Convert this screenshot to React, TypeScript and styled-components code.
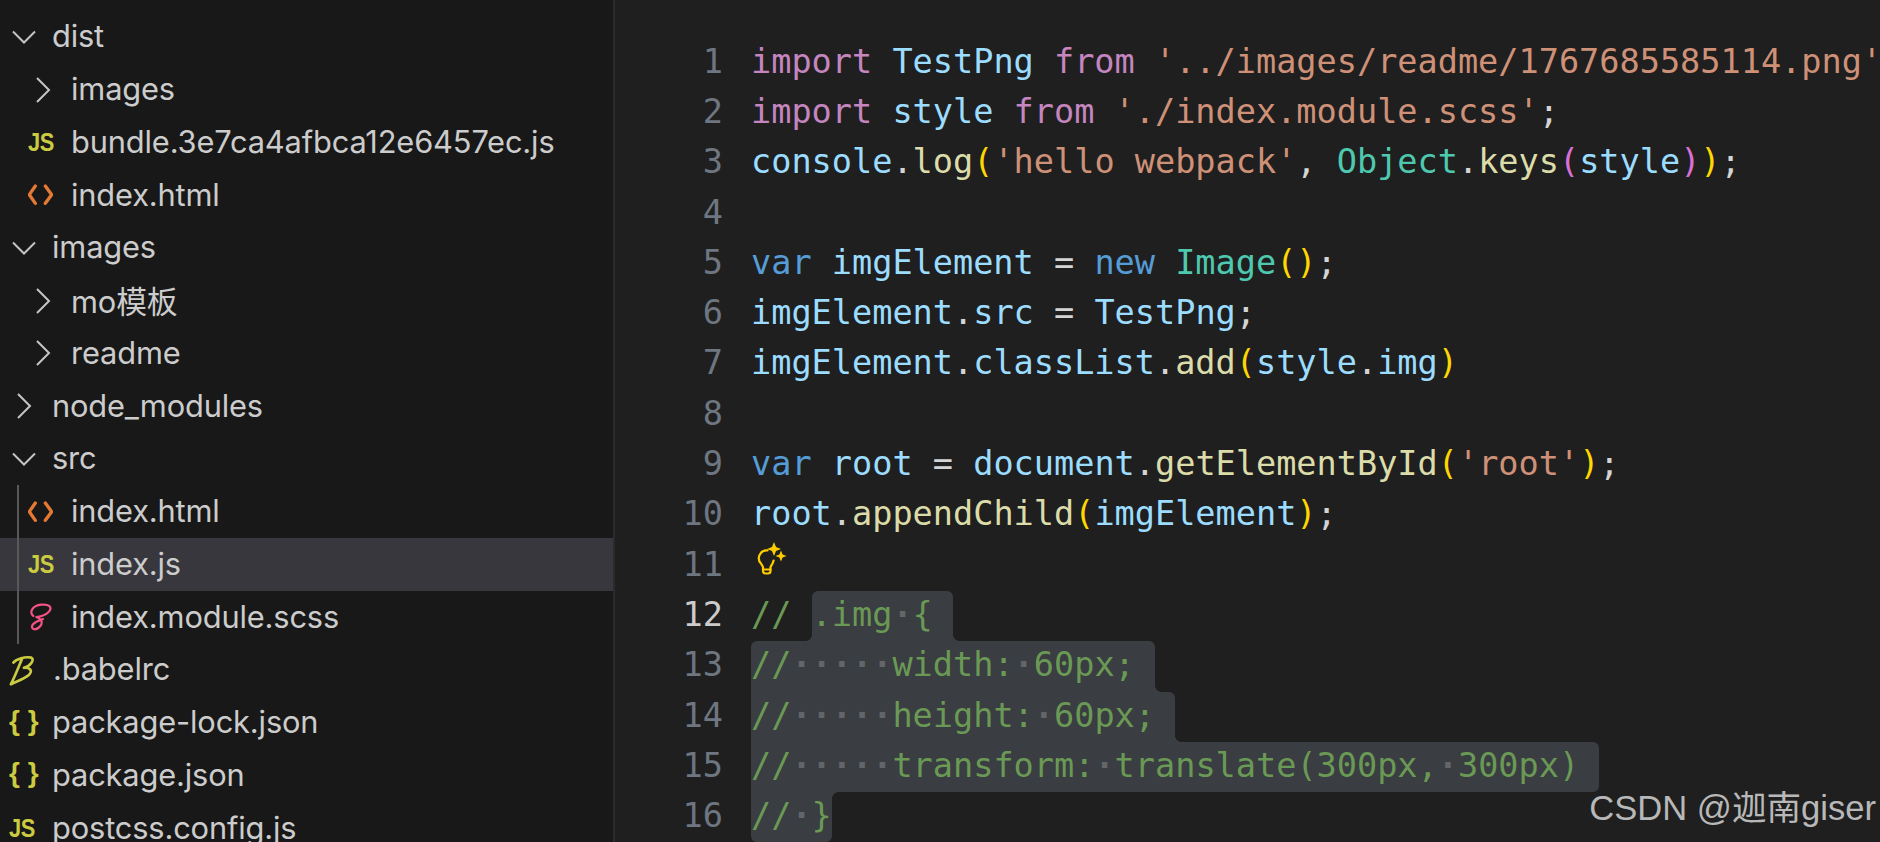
import React from "react";
import styled, { createGlobalStyle } from "styled-components";

const CH = 20.2;

const Global = createGlobalStyle`
  html, body { margin: 0; padding: 0; background: #1f1f1f; overflow: hidden; }
  #root { width: 1880px; height: 842px; }
`;

const Window = styled.div`
  position: relative;
  display: flex;
  width: 1880px;
  height: 842px;
  overflow: hidden;
  background: #1f1f1f;
`;

const Sidebar = styled.aside`
  flex: 0 0 613px;
  box-sizing: content-box;
  padding-top: 10.5px;
  background: #181818;
  border-right: 2px solid #2b2b2b;
  font-family: Inter, "Noto Sans CJK SC", sans-serif;
  font-size: 30.8px;
  color: #cccccc;
  overflow: hidden;
`;

const Group = styled.div`
  position: relative;
  &::before {
    content: "";
    position: absolute;
    z-index: 1;
    left: 17px;
    top: 0;
    bottom: 0;
    width: 2px;
    background: #585858;
  }
`;

const Row = styled.div<{ $level: number; $selected?: boolean }>`
  display: flex;
  align-items: center;
  height: 52.75px;
  padding-left: ${(p) => 9 + p.$level * 19}px;
  background: ${(p) => (p.$selected ? "#37373d" : "transparent")};
`;

const IconSlot = styled.span`
  display: flex;
  align-items: center;
  flex: 0 0 25px;
  height: 100%;
  margin-right: 18px;
`;

const Label = styled.span`
  padding-bottom: 2px;
  white-space: nowrap;
  letter-spacing: -0.15px;
`;

const JsGlyph = styled.span`
  display: block;
  width: 25px;
  font: 700 26px/1 "Liberation Sans", sans-serif;
  letter-spacing: -0.5px;
  color: #cbcb41;
  transform: scaleX(0.84);
  transform-origin: left center;
`;

const JsonGlyph = styled.span`
  display: block;
  width: 25px;
  font: 700 28px/1 "Liberation Sans", sans-serif;
  white-space: pre;
  color: #cbcb41;
  transform: translateY(-2px);
`;

const Chevron = styled.svg`
  flex: none;
  margin-left: 3px;
  margin-right: -3px;
  fill: none;
  stroke: #c5c5c5;
  stroke-width: 2;
`;

const FileSvg = styled.svg`
  flex: none;
  display: block;
  fill: none;
  stroke-linecap: round;
  stroke-linejoin: round;
`;

const Editor = styled.main`
  flex: 1;
  min-width: 0;
  padding-top: 37.7px;
  font-family: "DejaVu Sans Mono", monospace;
  font-size: 33.55px;
  overflow: hidden;
`;

const Line = styled.div`
  display: flex;
  height: 50.3px;
  line-height: 47px;
`;

const Gutter = styled.span<{ $active?: boolean }>`
  flex: 0 0 108px;
  margin-right: 28px;
  text-align: right;
  color: ${(p) => (p.$active ? "#cccccc" : "#6e7681")};
`;

const Code = styled.span`
  position: relative;
  flex: 1;
  min-width: 0;
  white-space: pre;
`;

const Text = styled.span`
  position: relative;
`;

const Tok = styled.span<{ $c: string }>`
  color: ${(p) => p.$c};
`;

const Dot = styled.span`
  color: #62666a;
  font-weight: 700;
`;

const Sel = styled.span<{ $from: number; $to: number; $tl?: number; $tr?: number; $br?: number; $bl?: number }>`
  position: absolute;
  top: 0;
  bottom: 0;
  left: ${(p) => p.$from * CH}px;
  width: ${(p) => (p.$to - p.$from) * CH}px;
  background: #3a3d41;
  border-radius: ${(p) => `${p.$tl ?? 0}px ${p.$tr ?? 0}px ${p.$br ?? 0}px ${p.$bl ?? 0}px`};
`;

const Notch = styled.i<{ $side: "left" | "right"; $edge: "top" | "bottom" }>`
  position: absolute;
  width: 6px;
  height: 6px;
  ${(p) => p.$side}: -6px;
  ${(p) => p.$edge}: 0;
  background: radial-gradient(
    circle at ${(p) => (p.$side === "left" ? "0" : "100%")} ${(p) => (p.$edge === "top" ? "100%" : "0")},
    transparent 5.5px,
    #3a3d41 6px
  );
`;

const Bulb = styled.svg`
  position: absolute;
  left: 5px;
  top: 1px;
  fill: none;
  stroke: #ffcc00;
  stroke-width: 2.2;
  stroke-linecap: round;
  stroke-linejoin: round;
`;

const Star = styled.path`
  fill: #ffcc00;
  stroke: none;
`;

const Watermark = styled.div`
  position: absolute;
  right: 4px;
  bottom: 16px;
  font-family: "Liberation Sans", "Noto Sans CJK SC", sans-serif;
  font-size: 34.6px;
  line-height: 36px;
  color: #b8b8b8;
  white-space: nowrap;
`;

const ChevDown = () => (
  <Chevron width="24" height="14" viewBox="0 0 24 14">
    <path d="M1 1.5 L12 12.5 L23 1.5" />
  </Chevron>
);
const ChevRight = () => (
  <Chevron width="24" height="26" viewBox="0 0 24 26">
    <path d="M6 1 L18 13 L6 25" />
  </Chevron>
);
const Html = () => (
  <FileSvg width="25" height="22" viewBox="40 62 75 62" stroke="#e37933" strokeWidth="10">
    <path d="M62 66 L44 92 L62 118 M92 66 L111 92 L92 118" />
  </FileSvg>
);
const Js = () => <JsGlyph>JS</JsGlyph>;
const Json = () => <JsonGlyph>{"{ }"}</JsonGlyph>;
const Sass = () => (
  <FileSvg width="24" height="31" viewBox="85 35 72 93" stroke="#f55385" strokeWidth="6.5">
    <path d="M101 77 C88 66 97 46 125 43 C148 41 159 50 148 64 C138 76 118 80 110 80 C122 84 132 93 122 107 C112 120 96 120 97 108 C98 96 116 92 130 86" />
  </FileSvg>
);
const Babel = () => (
  <FileSvg width="26" height="34" viewBox="24 183 84 102" stroke="#cbcb41" strokeWidth="8.5">
    <path d="M38 210 C48 198 76 190 96 194 C108 200 94 222 72 227 C92 226 102 236 88 250 C72 264 48 270 30 280 C42 258 54 226 66 198" />
  </FileSvg>
);

type Entry = { name: string; level: number; icon: React.ReactNode; selected?: boolean };
const e = (name: string, level: number, icon: React.ReactNode, selected?: boolean): Entry => ({ name, level, icon, selected });

const before: Entry[] = [
  e("dist", 0, <ChevDown />),
  e("images", 1, <ChevRight />),
  e("bundle.3e7ca4afbca12e6457ec.js", 1, <Js />),
  e("index.html", 1, <Html />),
  e("images", 0, <ChevDown />),
  e("mo模板", 1, <ChevRight />),
  e("readme", 1, <ChevRight />),
  e("node_modules", 0, <ChevRight />),
  e("src", 0, <ChevDown />),
];
const src: Entry[] = [
  e("index.html", 1, <Html />),
  e("index.js", 1, <Js />, true),
  e("index.module.scss", 1, <Sass />),
];
const after: Entry[] = [
  e(".babelrc", 0, <Babel />),
  e("package-lock.json", 0, <Json />),
  e("package.json", 0, <Json />),
  e("postcss.config.js", 0, <Js />),
];

const TreeRow = ({ entry }: { entry: Entry }) => (
  <Row $level={entry.level} $selected={entry.selected}>
    <IconSlot>{entry.icon}</IconSlot>
    <Label>{entry.name}</Label>
  </Row>
);

const KW = "#c586c0";
const VAR = "#9cdcfe";
const STR = "#ce9178";
const PUN = "#d4d4d4";
const FN = "#dcdcaa";
const Y = "#ffd700";
const PK = "#da70d6";
const CLS = "#4ec9b0";
const BL = "#569cd6";
const CM = "#6a9955";

const t = (c: string, s: string) => ({ c, s });
const code: { c: string; s: string }[][] = [
  [t(KW, "import "), t(VAR, "TestPng "), t(KW, "from "), t(STR, "'../images/readme/1767685585114.png'")],
  [t(KW, "import "), t(VAR, "style "), t(KW, "from "), t(STR, "'./index.module.scss'"), t(PUN, ";")],
  [t(VAR, "console"), t(PUN, "."), t(FN, "log"), t(Y, "("), t(STR, "'hello webpack'"), t(PUN, ", "), t(CLS, "Object"), t(PUN, "."), t(FN, "keys"), t(PK, "("), t(VAR, "style"), t(PK, ")"), t(Y, ")"), t(PUN, ";")],
  [],
  [t(BL, "var "), t(VAR, "imgElement "), t(PUN, "= "), t(BL, "new "), t(CLS, "Image"), t(Y, "()"), t(PUN, ";")],
  [t(VAR, "imgElement"), t(PUN, "."), t(VAR, "src "), t(PUN, "= "), t(VAR, "TestPng"), t(PUN, ";")],
  [t(VAR, "imgElement"), t(PUN, "."), t(VAR, "classList"), t(PUN, "."), t(FN, "add"), t(Y, "("), t(VAR, "style"), t(PUN, "."), t(VAR, "img"), t(Y, ")")],
  [],
  [t(BL, "var "), t(VAR, "root "), t(PUN, "= "), t(VAR, "document"), t(PUN, "."), t(FN, "getElementById"), t(Y, "("), t(STR, "'root'"), t(Y, ")"), t(PUN, ";")],
  [t(VAR, "root"), t(PUN, "."), t(FN, "appendChild"), t(Y, "("), t(VAR, "imgElement"), t(Y, ")"), t(PUN, ";")],
  [],
];

const Comment = ({ s }: { s: string }) => (
  <Tok $c={CM}>
    {s.split("·").map((part, i) => (
      <React.Fragment key={i}>
        {i > 0 && <Dot>·</Dot>}
        {part}
      </React.Fragment>
    ))}
  </Tok>
);

const selected: { text: string; sel: React.ReactNode }[] = [
  {
    text: "// .img·{",
    sel: (
      <Sel $from={3} $to={10} $tl={6} $tr={6}>
        <Notch $side="left" $edge="bottom" />
        <Notch $side="right" $edge="bottom" />
      </Sel>
    ),
  },
  {
    text: "//·····width:·60px;",
    sel: (
      <Sel $from={0} $to={20} $tl={6} $tr={6}>
        <Notch $side="right" $edge="bottom" />
      </Sel>
    ),
  },
  {
    text: "//·····height:·60px;",
    sel: (
      <Sel $from={0} $to={21} $tr={6}>
        <Notch $side="right" $edge="bottom" />
      </Sel>
    ),
  },
  {
    text: "//·····transform:·translate(300px,·300px)",
    sel: <Sel $from={0} $to={42} $tr={6} $br={6} />,
  },
  {
    text: "//·}",
    sel: (
      <Sel $from={0} $to={4} $bl={6} $br={6}>
        <Notch $side="right" $edge="top" />
      </Sel>
    ),
  },
];

export default function App() {
  return (
    <Window>
      <Global />
      <Sidebar>
        {before.map((x, i) => (
          <TreeRow key={i} entry={x} />
        ))}
        <Group>
          {src.map((x, i) => (
            <TreeRow key={i} entry={x} />
          ))}
        </Group>
        {after.map((x, i) => (
          <TreeRow key={i} entry={x} />
        ))}
      </Sidebar>
      <Editor>
        {code.map((tokens, i) => (
          <Line key={i}>
            <Gutter>{i + 1}</Gutter>
            <Code>
              {i === 10 && (
                <Bulb width="32" height="36" viewBox="0 0 32 36">
                  <path d="M11.5 8.4 A7.8 7.8 0 0 0 5 21.5 L7 25 V29 Q7 31.5 9.5 31.5 H12 Q14.5 31.5 14.5 29 V25 L16.5 21.5 Q17.3 20 17.6 18.6" />
                  <path d="M7 27.5 H14.5" />
                  <Star d="M18 0 L20 5 L25 7 L20 9 L18 14 L16 9 L11 7 L16 5 Z" />
                  <Star d="M25 8.5 L26.6 12.4 L30.5 14 L26.6 15.6 L25 19.5 L23.4 15.6 L19.5 14 L23.4 12.4 Z" />
                </Bulb>
              )}
              {tokens.map((k, j) => (
                <Tok key={j} $c={k.c}>
                  {k.s}
                </Tok>
              ))}
            </Code>
          </Line>
        ))}
        {selected.map((l, i) => (
          <Line key={i}>
            <Gutter $active={i === 0}>{i + 12}</Gutter>
            <Code>
              {l.sel}
              <Text>
                <Comment s={l.text} />
              </Text>
            </Code>
          </Line>
        ))}
      </Editor>
      <Watermark>CSDN @迦南giser</Watermark>
    </Window>
  );
}
